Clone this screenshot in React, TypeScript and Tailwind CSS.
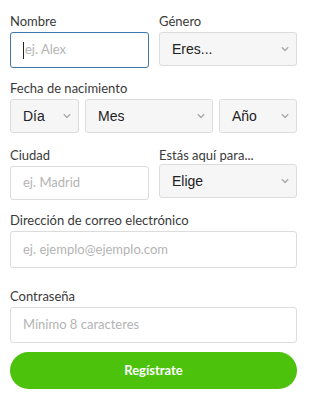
import React from "react";

const Chevron = () => (
  <svg width="8" height="5" viewBox="0 0 8 5" className="absolute right-[7px] top-1/2 -translate-y-1/2">
    <path d="M0.8 0.8 L4 4 L7.2 0.8" fill="none" stroke="#a8a8a8" strokeWidth="1.3" />
  </svg>
);

const Select = ({ text, className = "" }: { text: string; className?: string }) => (
  <div
    className={`relative flex items-center h-[34px] rounded-[3px] border border-[#dcdcdc] bg-[#f6f6f6] pl-[12px] text-[14px] text-[#222] ${className}`}
    style={{ fontFamily: '"Liberation Sans", Arial, sans-serif' }}
  >
    {text}
    <Chevron />
  </div>
);

const Input = ({ ph, focused = false, h = "h-[36px]" }: { ph: string; focused?: boolean; h?: string }) => (
  <div
    className={`flex items-center ${h} rounded-[3px] border ${focused ? "border-[#3d78a8]" : "border-[#dcdcdc]"} bg-white pl-[12px] text-[13px] text-[#b4b4b4]`}
  >
    {focused && <span className="w-px h-[17px] bg-[#222] mr-px" />}
    {ph}
  </div>
);

const Label = ({ children }: { children: React.ReactNode }) => (
  <div className="h-[18px] leading-[18px] text-[13px] text-[#3a3a3a] mb-[2px]">{children}</div>
);

export default function App() {
  return (
    <div
      className="w-[312px] h-[395px] bg-white pl-[10px] pr-[15px] pt-[12px]"
      style={{ fontFamily: "Lato, sans-serif" }}
    >
      <div className="grid grid-cols-[139px_138px] gap-x-[10px]">
        <div>
          <Label>Nombre</Label>
          <Input ph="ej. Alex" focused />
        </div>
        <div>
          <Label>Género</Label>
          <Select text="Eres..." />
        </div>
      </div>

      <div className="mt-[11px]">
        <Label>Fecha de nacimiento</Label>
        <div className="flex gap-[6px]">
          <Select text="Día" className="w-[69px] h-[33px]" />
          <Select text="Mes" className="w-[128px] h-[33px]" />
          <Select text="Año" className="w-[78px] h-[33px]" />
        </div>
      </div>

      <div className="grid grid-cols-[139px_138px] gap-x-[10px] mt-[13px]">
        <div>
          <Label>Ciudad</Label>
          <Input ph="ej. Madrid" h="h-[34px]" />
        </div>
        <div>
          <Label>Estás aquí para...</Label>
          <Select text="Elige" className="-mt-[2px]" />
        </div>
      </div>

      <div className="mt-[11px]">
        <Label>Dirección de correo electrónico</Label>
        <Input ph="ej. ejemplo@ejemplo.com" h="h-[37px]" />
      </div>

      <div className="mt-[19px]">
        <Label>Contraseña</Label>
        <Input ph="Mínimo 8 caracteres" />
      </div>

      <button className="mt-[9px] w-full h-[37px] rounded-full bg-[#4cc20c] text-white font-bold text-[13px] flex items-center justify-center">
        Regístrate
      </button>
    </div>
  );
}
